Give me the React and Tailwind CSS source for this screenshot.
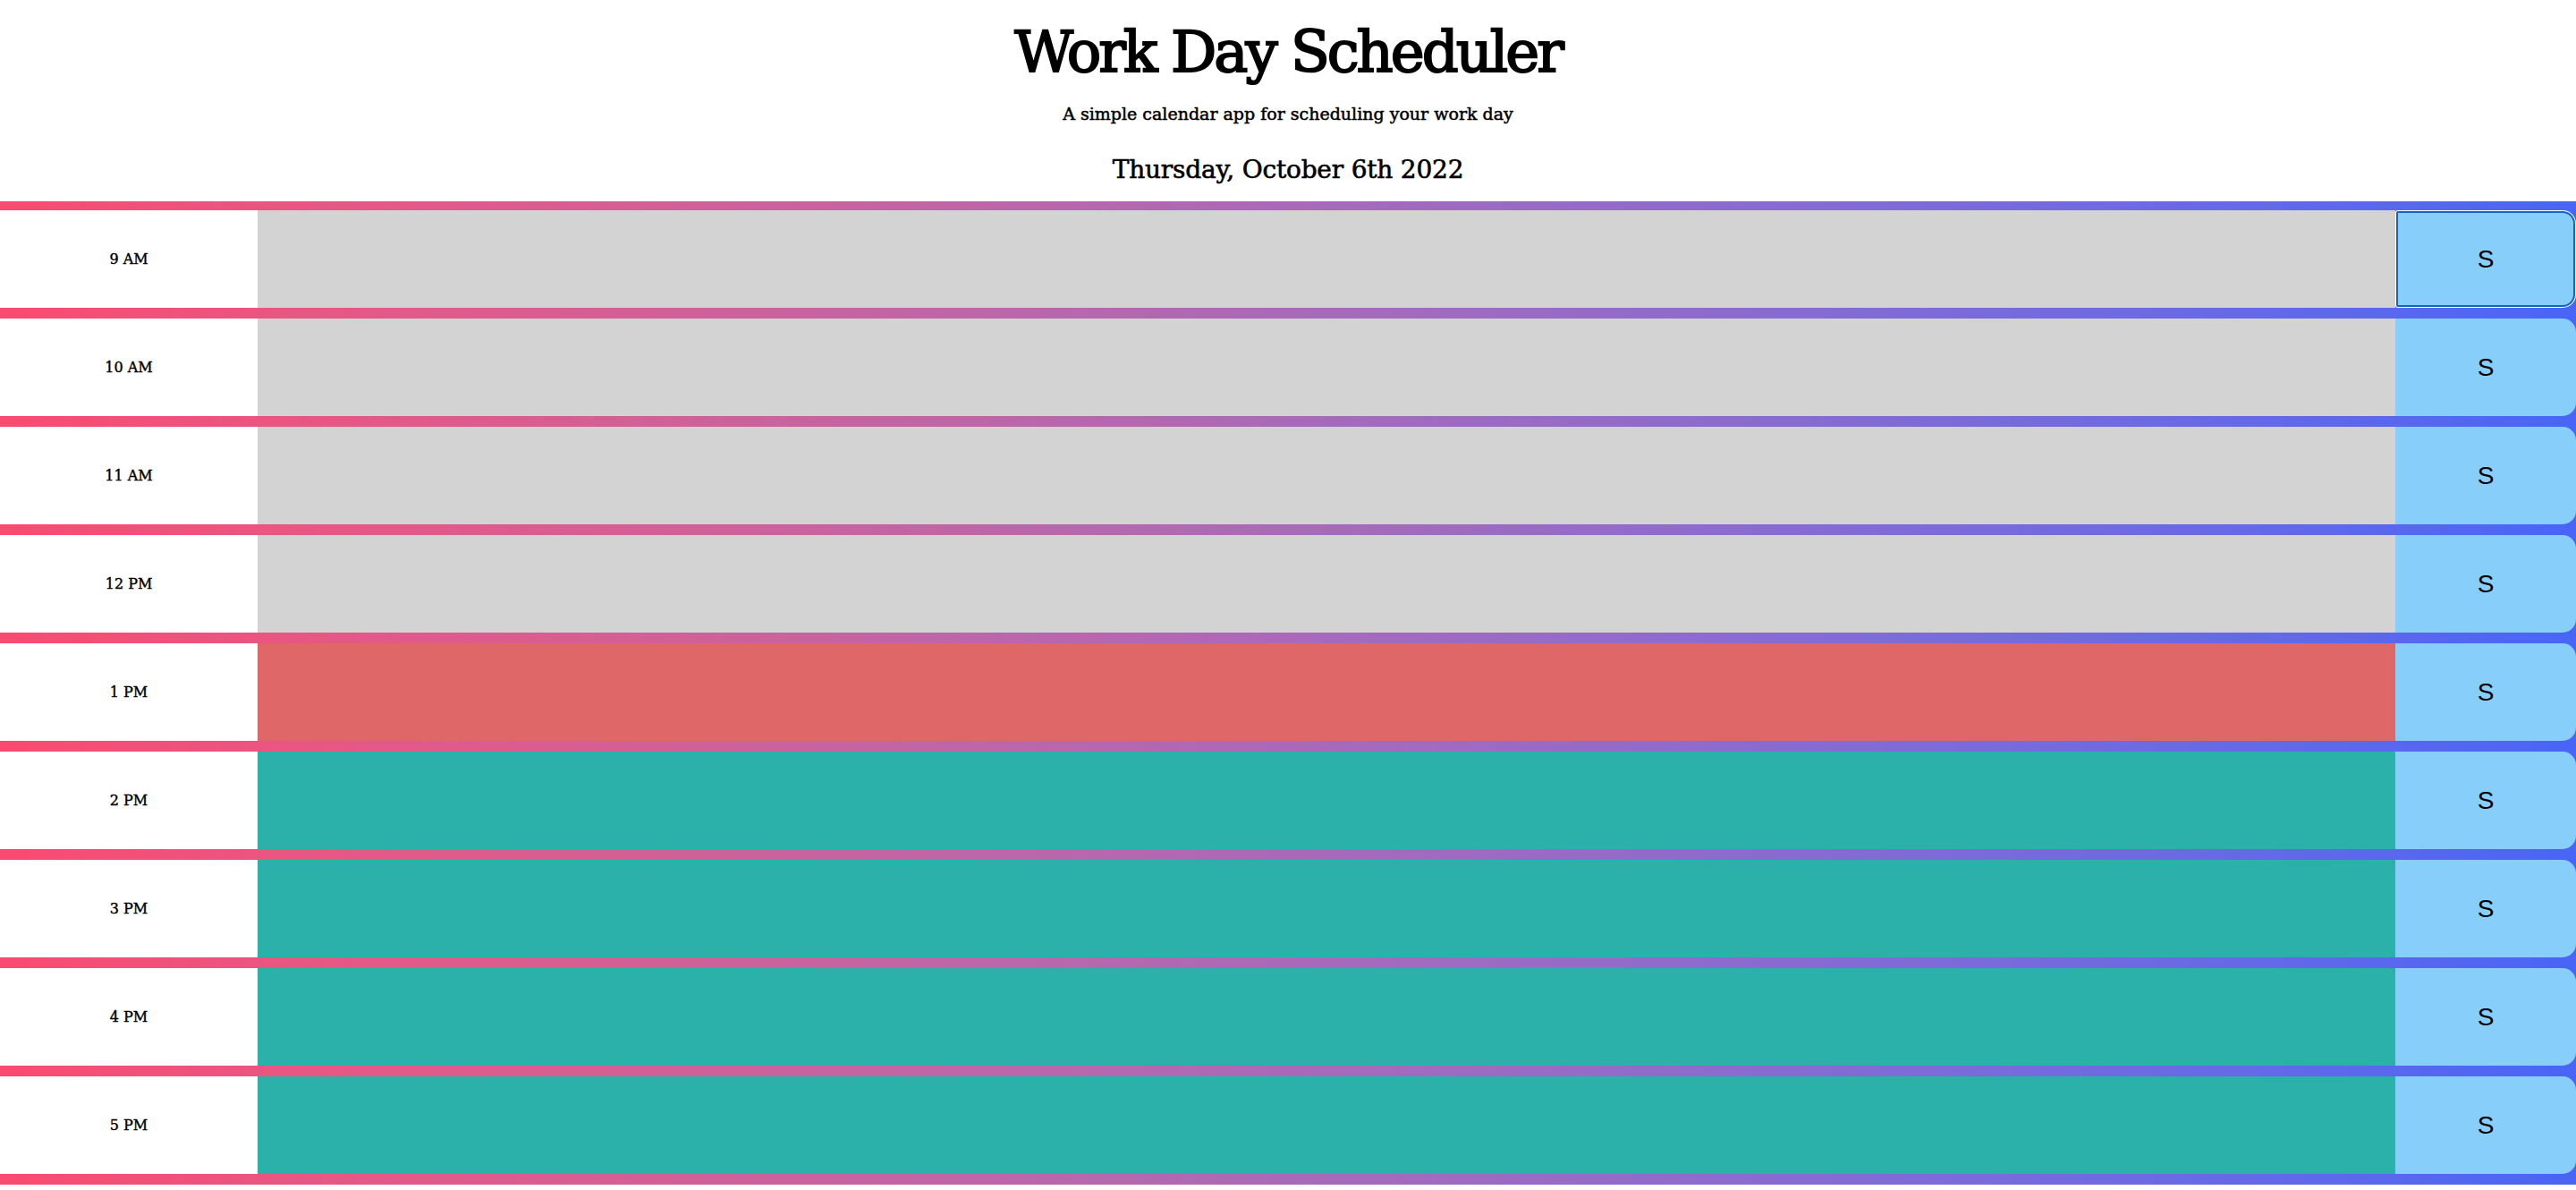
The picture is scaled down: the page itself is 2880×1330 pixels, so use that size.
import { useState } from 'react';

const hours = [
    { label: '9 AM', state: 'past' },
    { label: '10 AM', state: 'past' },
    { label: '11 AM', state: 'past' },
    { label: '12 PM', state: 'past' },
    { label: '1 PM', state: 'present' },
    { label: '2 PM', state: 'future' },
    { label: '3 PM', state: 'future' },
    { label: '4 PM', state: 'future' },
    { label: '5 PM', state: 'future' },
];

const stateClass = {
    past: 'bg-[#d3d3d3]',
    present: 'bg-[#df6767]',
    future: 'bg-[#2bb0aa]',
};

export default function App() {
    const [notes, setNotes] = useState({});

    return (
        <div className="min-h-screen bg-white text-black font-['DejaVu_Serif',serif]">
            {/* Header */}
            <header className="text-center pt-[26px] pb-[21px]">
                <h1 className="text-[64px] leading-none tracking-[-3px] [-webkit-text-stroke:2px_black]">
                    Work Day Scheduler
                </h1>
                <p className="mt-[28px] text-[19px] leading-none [-webkit-text-stroke:0.5px_black]">
                    A simple calendar app for scheduling your work day
                </p>
                <p className="mt-[39px] text-[28px] leading-none tracking-[-0.2px] [-webkit-text-stroke:0.6px_black]">
                    Thursday, October 6th 2022
                </p>
            </header>

            {/* Time blocks */}
            <div className="flex flex-col gap-[12px] pt-[10px] pb-[12px] bg-linear-to-r from-[#fa4a70] to-[#4865f6]">
                {hours.map((h, i) => (
                    <div key={h.label} className="flex h-[109px]">
                        <div className="w-[288px] bg-white flex items-center justify-center text-[16px] [-webkit-text-stroke:0.4px_black]">
                            {h.label}
                        </div>
                        <textarea
                            className={`flex-1 resize-none border-0 outline-none p-2 text-white ${stateClass[h.state]}`}
                            value={notes[h.label] || ''}
                            onChange={(e) => setNotes({ ...notes, [h.label]: e.target.value })}
                        />
                        <button
                            className={`w-[202px] bg-[#87cefa] rounded-r-[15px] flex items-center justify-center text-[28px] font-['Liberation_Sans',sans-serif] ${
                                i === 0 ? 'rounded-l-[3px] shadow-[inset_0_0_0_1px_white,inset_0_0_0_3px_#1565c0]' : ''
                            }`}
                        >
                            S
                        </button>
                    </div>
                ))}
            </div>
        </div>
    );
}
